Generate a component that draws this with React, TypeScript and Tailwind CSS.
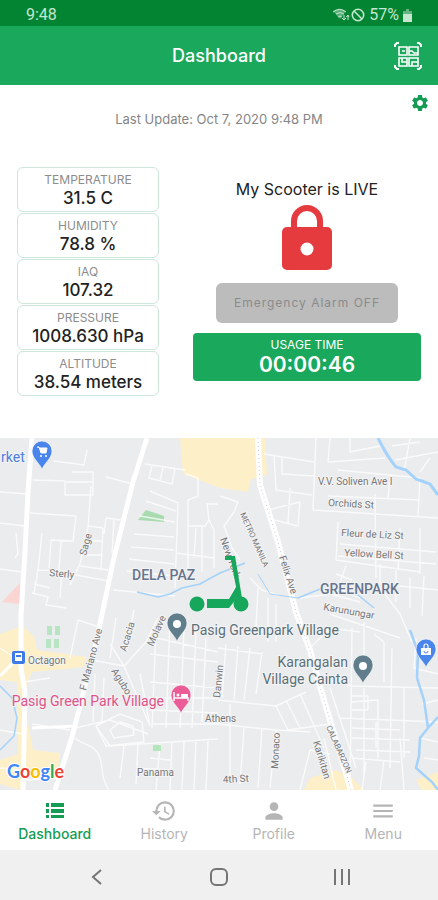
import React from "react";
import { MdHistory, MdMenu, MdPerson, MdSettings } from "react-icons/md";

const ListIcon: React.FC = () => (
  <svg width="26" height="26" viewBox="0 0 26 26" fill="currentColor" aria-hidden="true">
    <path d="M4 5 H7 V9 H4 Z M9 5 H22 V9 H9 Z M4 11 H7 V15 H4 Z M9 11 H22 V15 H9 Z M4 17 H7 V20 H4 Z M9 17 H22 V20 H9 Z" />
  </svg>
);

const readings = [
  { label: "TEMPERATURE", value: "31.5 C" },
  { label: "HUMIDITY", value: "78.8 %" },
  { label: "IAQ", value: "107.32" },
  { label: "PRESSURE", value: "1008.630 hPa" },
  { label: "ALTITUDE", value: "38.54 meters" },
];

const tabs = [
  { label: "Dashboard", icon: <ListIcon />, active: true },
  { label: "History", icon: <MdHistory size={26} />, active: false },
  { label: "Profile", icon: <MdPerson size={26} />, active: false },
  { label: "Menu", icon: <MdMenu size={26} />, active: false },
];

// thin side streets
const streets = [
  "M0 54 L27 56 M0 85 L25 88 M33 42 L65 43 M72 34 H93 V57 H65 V44 H93 M54 23 L84 27 L87 12 M106 39 L133 46",
  "M30 75 L76 78 L73 104 M91 48 L88 90 L80 126 L70 147 M42 95 L38 132 L34 155 M51 102 L72 103 M51 102 L49 130 M61 103 L59 132",
  "M88 88 L103 90 M86 103 H103 M84 117 H103 M80 128 L108 132 M76 137 L109 143 M103 90 L101 130 M106 80 L121 82 M106 80 L104 96 M114 82 L112 116",
  "M38 132 L62 133 L60 160 M32 155 L48 159 L46 167 L66 170 M34 146 L50 150 M16 95 L18 116 L15 120 M0 131 L22 134",
  "M145 26 L185 32 M152 28 L149 40 L172 46 L175 31 M163 30 L160 43 M150 53 L178 65 L175 150 M146 63 L176 73 M140 78 L175 84 M134 96 L174 99 M131 109 L174 112 M129 121 L174 126 M127 133 L174 138 M113 152 L175 158",
  "M186 36 L198 40 V58 L188 62 V130 M188 88 H205 L209 82 L207 66 H218 M209 82 L214 92 V130 M196 90 L194 120 M202 89 V134 M176 115 L214 120",
  "M220 58 L238 64 L234 74 L224 88 L232 110 L240 122 M264 16 L314 24 M274 18 L276 52 L312 57 M282 20 V36 L314 38 M316 0 L313 72 M268 72 L300 64 L298 88 L274 82 M290 50 L288 86",
  "M313 72 L438 80 M330 0 L328 24 L385 20 M350 0 V14 L380 8 M338 32 L420 40 L418 78 M328 58 L420 62 M338 84 L336 122 L420 134 M375 56 L376 140 M340 106 L436 114 M338 118 L436 126",
  "M390 40 L388 60 M392 8 L420 4 M395 22 L438 14 M410 0 L404 34 M400 90 L398 132 M420 90 V136 M430 20 L420 34",
  "M346 128 L338 150 L360 160 M336 136 L352 142 M380 126 V146 L438 152 M396 130 V164 M410 140 V170 M376 144 L400 176 L412 204 M424 138 L422 178",
  "M238 142 L226 170 M250 140 L262 152 L280 158 M258 150 L256 190 M268 160 L268 204 M276 166 V204 M300 160 L330 156 L360 164",
  "M92 222 L124 228 L150 288 M95 236 L93 284 M104 240 L102 284 M110 206 L124 228 L146 204 L158 180 M116 180 L110 220 M134 172 L126 210 M78 182 L102 190 M78 182 L70 220 M96 288 L106 308 L144 304 L142 284 L120 276 Z M110 292 L114 300 L134 297 L133 288 L120 284 Z",
  "M75 290 L110 282 L148 296 M75 300 C84 308 96 306 100 320 S100 338 109 352 M96 288 L110 308 L218 301 M124 308 L120 340 M138 306 L136 346 M160 306 L156 352 M172 305 L170 352 M184 304 L182 352 M196 304 L194 352 M208 303 L206 352 M150 320 L170 322 M136 330 L170 332",
  "M148 198 L218 214 M150 216 L218 224 M150 244 L218 250 M148 260 H218 M150 272 L218 275 M152 286 H218 M156 192 L152 290 M170 180 L166 290 M184 190 L180 290 M196 192 L192 290 M206 200 L202 284 M140 236 L150 288",
  "M218 210 L262 216 M226 206 L222 260 M238 208 L234 262 M250 210 L244 262 M262 214 L256 256 M218 262 L276 268 L306 254 M218 286 L276 292 L310 294 M276 268 L288 292 L330 286 M286 262 L300 290 M300 256 L324 310 M230 266 V340 M244 290 L240 346 M262 290 L258 350 M276 292 L270 350",
  "M310 210 L330 190 L360 194 M320 240 L352 248 L438 250 M330 176 L400 200 M352 190 L350 350 M364 184 V244 M374 196 L384 204 V244 M392 210 L390 330 M352 258 H368 V272 H352 M352 264 L378 262 V320 M352 290 L400 292 M352 300 L410 302 M356 312 L410 314 M340 280 L438 284 M364 250 V340 M376 284 V310 M404 250 V320",
  "M330 250 L356 330 M310 312 L330 316 M310 312 L300 352 M324 300 L336 352 M352 320 L400 324 M366 324 L362 352 M384 322 L380 352 M400 300 L404 352 M416 200 L414 230 L438 236 M418 250 H438 M422 266 L438 262 M420 300 L438 304 M424 320 L438 322",
  "M0 330 L22 332 M26 342 L60 340 M32 286 L70 292 M0 292 L22 296 M0 210 L18 222 L22 236 M24 244 L50 240",
];

const mainRoads = [
  "M32 0 L28 54 L25 114 L21 177 L21 230 L25 255 L23 352",
  "M147 0 L133 44 L113 124 L103 172 L95 209 L84 252 L72 299 L55 352",
];

const felixAve = "M258 0 L260 47 L278 104 L296 174 L310 212 L321 252 L351 352";

type PinProps = { x: number; y: number; color: string; children?: React.ReactNode };

// x, y is the tip of the pin
const Pin: React.FC<PinProps> = ({ x, y, color, children }) => (
  <g transform={`translate(${x} ${y})`}>
    <path
      d="M0 0 C-1 -6 -10 -11 -10 -19 A10 10 0 0 1 10 -19 C10 -11 1 -6 0 0 Z"
      fill={color}
      stroke="#fff"
      strokeWidth="0.6"
    />
    {children}
  </g>
);

const StreetMap: React.FC = () => (
  <svg
    viewBox="0 0 438 352"
    preserveAspectRatio="xMidYMid slice"
    className="absolute inset-0 h-full w-full font-['Roboto',sans-serif]"
    role="img"
    aria-label="Scooter location map"
  >
    <rect width="438" height="352" fill="#ebecee" />

    <g fill="#fdf0c8">
      <path d="M180 0 H265 L267 37 L251 41 L248 54 L220 50 L183 36 Z" />
      <path d="M0 196 L22 188 L34 198 L37 212 L86 219 L84 229 L32 234 L27 244 L27 280 L33 312 L60 315 L57 340 L30 336 L20 352 L0 346 V322 L18 316 L17 244 L0 242 Z" />
      <path d="M310 340 L336 332 L352 340 L364 352 H304 Z M416 342 L438 334 V352 H422 Z" />
    </g>
    <path d="M138 82 L146 72 L164 78 L164 84 Z" fill="#a8dcb0" />
    <path d="M47 188 H52 V197 H47 Z M55 188 H60 V197 H55 Z M46 201 H51 V210 H46 Z M54 201 H59 V210 H54 Z" fill="#b9e4c3" />
    <path d="M2 164 L20 145 V166 Z" fill="#fbd5d1" />

    <g fill="none" stroke="#fff" strokeLinejoin="round">
      <path d={streets.join(" ")} strokeWidth="1.4" opacity="0.75" />
      {mainRoads.map((d) => (
        <path key={d} d={d} strokeWidth="5" />
      ))}
      <path d={felixAve} strokeWidth="6" />
      <path d="M0 238 L22 216 M32 290 L76 288" strokeWidth="3" />
    </g>
    <path d="M153 307 H161 V313 H153 Z" fill="#b3e6ba" />
    <path d={felixAve} fill="none" stroke="#c9cbcf" strokeWidth="1" strokeDasharray="1 3" />

    <g fill="none" stroke="#a4d2fa" strokeWidth="1.5">
      <path d="M378 0 C384 12 390 22 396 29 L406 32 L416 41 L430 46 L438 57" strokeWidth="3" />
      <path d="M137 154 L158 159 L170 156 L182 150 L200 146 L220 135 L245 125" />
      <path d="M258 136 L270 156 L298 160" strokeWidth="1" />
      <path d="M298 160 L320 151 L358 157 L374 170" />
      <path d="M410 192 L418 214 L417 240 L424 262 L428 290 L420 300 L419 318 L416 330 L432 344 L438 352 M428 290 L438 279" strokeWidth="2.5" />
      <path d="M0 248 L12 260 L17 280 L14 298 L0 312" />
    </g>

    <g fill="#777" stroke="#f3f3f4" strokeWidth="2" paintOrder="stroke" fontSize="10">
      <text x="318" y="47">V.V. Soliven Ave I</text>
      <text x="328" y="68" transform="rotate(3 328 68)">Orchids St</text>
      <text x="341" y="98" transform="rotate(3 341 98)">Fleur de Liz St</text>
      <text x="344" y="118" transform="rotate(3 344 118)">Yellow Bell St</text>
      <text x="323" y="172" transform="rotate(10 323 172)">Karunungar</text>
      <text x="49" y="138" transform="rotate(5 49 138)">Sterly</text>
      <text x="86" y="118" transform="rotate(-75 86 118)">Sage</text>
      <text x="28" y="226">Octagon</text>
      <text x="86" y="253" transform="rotate(-75 86 253)">F Mariano Ave</text>
      <text x="126" y="214" transform="rotate(-73 126 214)">Acacia</text>
      <text x="153" y="209" transform="rotate(-66 153 209)">Molave</text>
      <text x="111" y="233" transform="rotate(58 111 233)">Agubo</text>
      <text x="220" y="260" transform="rotate(-84 220 260)">Danwin</text>
      <text x="205" y="284">Athens</text>
      <text x="137" y="338">Panama</text>
      <text x="223" y="345" transform="rotate(-3 223 345)">4th St</text>
      <text x="278" y="331" transform="rotate(-87 278 331)">Monaco</text>
      <text x="313" y="304" transform="rotate(73 313 304)">Karikitan</text>
      <text x="220" y="101" transform="rotate(70 220 101)">New York</text>
      <text x="279" y="119" transform="rotate(72 279 119)">Felix Ave</text>
      <text x="240" y="76" transform="rotate(66 240 76)" fontSize="8">METRO MANILA</text>
      <text x="326" y="289" transform="rotate(66 326 289)" fontSize="8">CALABARZON</text>
    </g>

    <g fill="#66758c" stroke="#f3f3f4" strokeWidth="2" paintOrder="stroke" fontSize="14" fontWeight="500">
      <text x="132" y="142">DELA PAZ</text>
      <text x="320" y="156">GREENPARK</text>
    </g>
    <g fill="#5b7078" stroke="#f3f3f4" strokeWidth="2" paintOrder="stroke" fontSize="14">
      <text x="191" y="197">Pasig Greenpark Village</text>
      <text x="348" y="229" textAnchor="end">Karangalan</text>
      <text x="348" y="246" textAnchor="end">Village Cainta</text>
      <text x="164" y="268" textAnchor="end" fill="#e0528a">Pasig Green Park Village</text>
      <text x="1" y="24" fill="#4a80e0">rket</text>
    </g>

    <Pin x={42} y={32} color="#4a85ec">
      <path d="M-5 -23 H-3 L-1 -17 H4 L5 -22 H-2" fill="#fff" stroke="#fff" strokeWidth="1" />
      <circle cx="-1" cy="-14" r="1" fill="#fff" />
      <circle cx="4" cy="-14" r="1" fill="#fff" />
    </Pin>
    <Pin x={177} y={204} color="#607d8b">
      <circle cy="-18" r="4" fill="#fff" />
    </Pin>
    <Pin x={363} y={246} color="#607d8b">
      <circle cy="-18" r="4" fill="#fff" />
    </Pin>
    <Pin x={181} y={276} color="#ea5c96">
      <path d="M-7 -22 V-13 M-7 -16 H7 V-13" fill="none" stroke="#fff" strokeWidth="1.5" />
      <rect x="0" y="-20" width="7" height="4" fill="#fff" />
      <circle cx="-3" cy="-19" r="1.5" fill="#fff" />
    </Pin>
    <Pin x={426} y={230} color="#4a85ec">
      <path d="M-5 -20 H5 V-13 H-5 Z" fill="#fff" />
      <path d="M-2 -20 V-22 A2 2 0 0 1 2 -22 V-20" fill="none" stroke="#fff" strokeWidth="1.2" />
      <path d="M-2 -17 A2 2 0 0 0 2 -17" fill="none" stroke="#4a85ec" strokeWidth="1" />
    </Pin>

    {/* bus stop */}
    <rect x="12" y="213" width="13" height="13" rx="2" fill="#3f7be8" />
    <path d="M15 215 H22 V223 H15 Z" fill="#fff" />
    <path d="M16 217 H21 V219 H16 Z" fill="#3f7be8" />

    {/* scooter */}
    <g fill="#16a75c">
      <path d="M225 118 H235 L242 160 L237 160 L229 170 H207 V161 H229 L236 149 L231 122 H225 Z" />
      <circle cx="197" cy="166" r="7.5" />
      <circle cx="241" cy="166" r="7.5" />
    </g>

    <text x="7" y="340" fontSize="18" stroke="#fff" strokeWidth="2" paintOrder="stroke" className="font-['Lato',sans-serif] font-bold">
      <tspan fill="#4285f4">G</tspan>
      <tspan fill="#ea4335">o</tspan>
      <tspan fill="#fbbc05">o</tspan>
      <tspan fill="#4285f4">g</tspan>
      <tspan fill="#34a853">l</tspan>
      <tspan fill="#ea4335">e</tspan>
    </text>
  </svg>
);

const StatusBar: React.FC = () => (
  <div className="flex h-[26px] items-center justify-between bg-[#028433] px-[26px] pt-1 font-['Roboto',sans-serif] text-base text-[#c5e6cf]">
    <span>9:48</span>
    <div className="flex items-center gap-1">
      <svg width="32" height="14" viewBox="0 0 32 14" fill="none" stroke="currentColor" aria-hidden="true">
        <path d="M0 3 Q6 -2 13 3 L7 11 Z" fill="currentColor" stroke="none" opacity="0.45" />
        <path d="M0 4 Q7 -1 13 4 M3 6 Q7 3 11 6 M5 9 Q7 7 9 9" />
        <path d="M11 12 V7 M9 10 L11 12 L13 10 M15 7 V12 M13 9 L15 7 L16 9" />
        <circle cx="25" cy="7" r="5.7" strokeWidth="1.6" />
        <path d="M21 3 L29 11" strokeWidth="1.6" />
      </svg>
      <span>57%</span>
      <svg width="9" height="13" viewBox="0 0 9 13" fill="currentColor" aria-hidden="true">
        <path d="M3 0 H6 V2 H9 V5 H0 V2 H3 Z" opacity="0.5" />
        <path d="M0 5 H9 V13 H0 Z" />
      </svg>
    </div>
  </div>
);

const QrIcon: React.FC = () => (
  <svg width="28" height="28" viewBox="0 0 28 28" fill="none" stroke="currentColor" strokeWidth="1.6" aria-hidden="true">
    <path d="M1 5 V3 L3 1 H5 M23 1 H25 L27 3 V5 M27 23 V25 L25 27 H23 M5 27 H3 L1 25 V23" strokeWidth="2" />
    <path d="M5 5 H13 V13 H5 Z M15 5 H24 V13 H15 Z M5 16 H13 V24 H5 Z M15 16 H24 V24 H15 Z" />
    <path d="M8 9 H11 M15 9 H18 L20 11 H24 M8 16 V20 H13 M18 24 V20 H24" />
  </svg>
);

const App: React.FC = () => {
  return (
    <div className="flex min-h-screen flex-col bg-white font-['Inter',sans-serif]">
      <StatusBar />

      <header className="grid h-[59px] grid-cols-[1fr_auto_1fr] items-center bg-[#1aa85d] px-4 text-white">
        <h1 className="col-start-2 text-lg font-medium">Dashboard</h1>
        <button aria-label="Scan QR code" className="justify-self-end">
          <QrIcon />
        </button>
      </header>

      <main className="flex flex-1 flex-col">
        <div className="flex h-[26px] justify-end px-2 pt-2">
          <button aria-label="Settings" className="h-5 text-[#149c55]">
            <MdSettings size={20} />
          </button>
        </div>
        <p className="text-center text-[13px] leading-4 text-[#858585]">
          Last Update: Oct 7, 2020 9:48 PM
        </p>

        <div className="flex gap-[34px] px-[17px] pt-10 pb-[42px]">
          <dl className="flex w-[142px] shrink-0 flex-col gap-px">
            {readings.map((reading) => (
              <div
                key={reading.label}
                className="h-[45px] rounded-md border border-[#cfe6da] pt-1 text-center"
              >
                <dt className="text-xs leading-4 text-[#8c8c8c]">{reading.label}</dt>
                <dd className="text-[17px] leading-5 font-medium text-[#222]">{reading.value}</dd>
              </div>
            ))}
          </dl>

          <div className="flex flex-1 flex-col items-center pt-[10px]">
            <h2 className="text-base leading-6 text-[#222]">My Scooter is LIVE</h2>
            <button aria-label="Unlock scooter" className="mt-1 text-[#e53b3f]">
              <svg width="52" height="66" viewBox="0 0 52 66" aria-hidden="true">
                <path d="M13 24 V16 A13 13 0 0 1 39 16 V24" fill="none" stroke="currentColor" strokeWidth="6" />
                <rect x="1" y="22" width="50" height="43" rx="5" fill="currentColor" />
                <circle cx="26" cy="44" r="6.5" fill="#fff" />
              </svg>
            </button>
            <button className="mt-3 h-10 w-[182px] rounded-md bg-[#bcbcbc] text-xs tracking-[1px] text-[#8b8b8b]">
              Emergency Alarm OFF
            </button>
            <div className="mt-[10px] h-12 w-full rounded bg-[#1aa85d] pt-1 text-center text-white">
              <p className="text-xs leading-4">USAGE TIME</p>
              <p className="text-[21px] leading-6 font-semibold">00:00:46</p>
            </div>
          </div>
        </div>

        <section className="relative min-h-[352px] flex-1 overflow-hidden">
          <StreetMap />
        </section>
      </main>

      <nav className="grid h-[60px] grid-cols-4 bg-white">
        {tabs.map(({ label, icon, active }) => (
          <a
            key={label}
            href="#"
            className={
              active
                ? "flex flex-col items-center pt-2 text-sm font-medium text-[#149c55]"
                : "flex flex-col items-center pt-2 text-sm text-[#b5b5b5]"
            }
          >
            {icon}
            {label}
          </a>
        ))}
      </nav>

      <div className="flex h-[50px] items-center justify-between bg-[#f0f0f0] px-[86px] pt-1 text-[#757575]">
        <button aria-label="Back">
          <svg width="20" height="20" viewBox="0 0 20 20" fill="none" stroke="currentColor" strokeWidth="2" aria-hidden="true">
            <path d="M15 3 L7 10 L15 17" />
          </svg>
        </button>
        <button aria-label="Home">
          <svg width="20" height="20" viewBox="0 0 20 20" fill="none" stroke="currentColor" strokeWidth="2" aria-hidden="true">
            <rect x="2" y="2" width="16" height="16" rx="5" />
          </svg>
        </button>
        <button aria-label="Recent apps">
          <svg width="20" height="20" viewBox="0 0 20 20" fill="none" stroke="currentColor" strokeWidth="2" aria-hidden="true">
            <path d="M3 2 V18 M10 2 V18 M17 2 V18" />
          </svg>
        </button>
      </div>
    </div>
  );
};

export default App;
